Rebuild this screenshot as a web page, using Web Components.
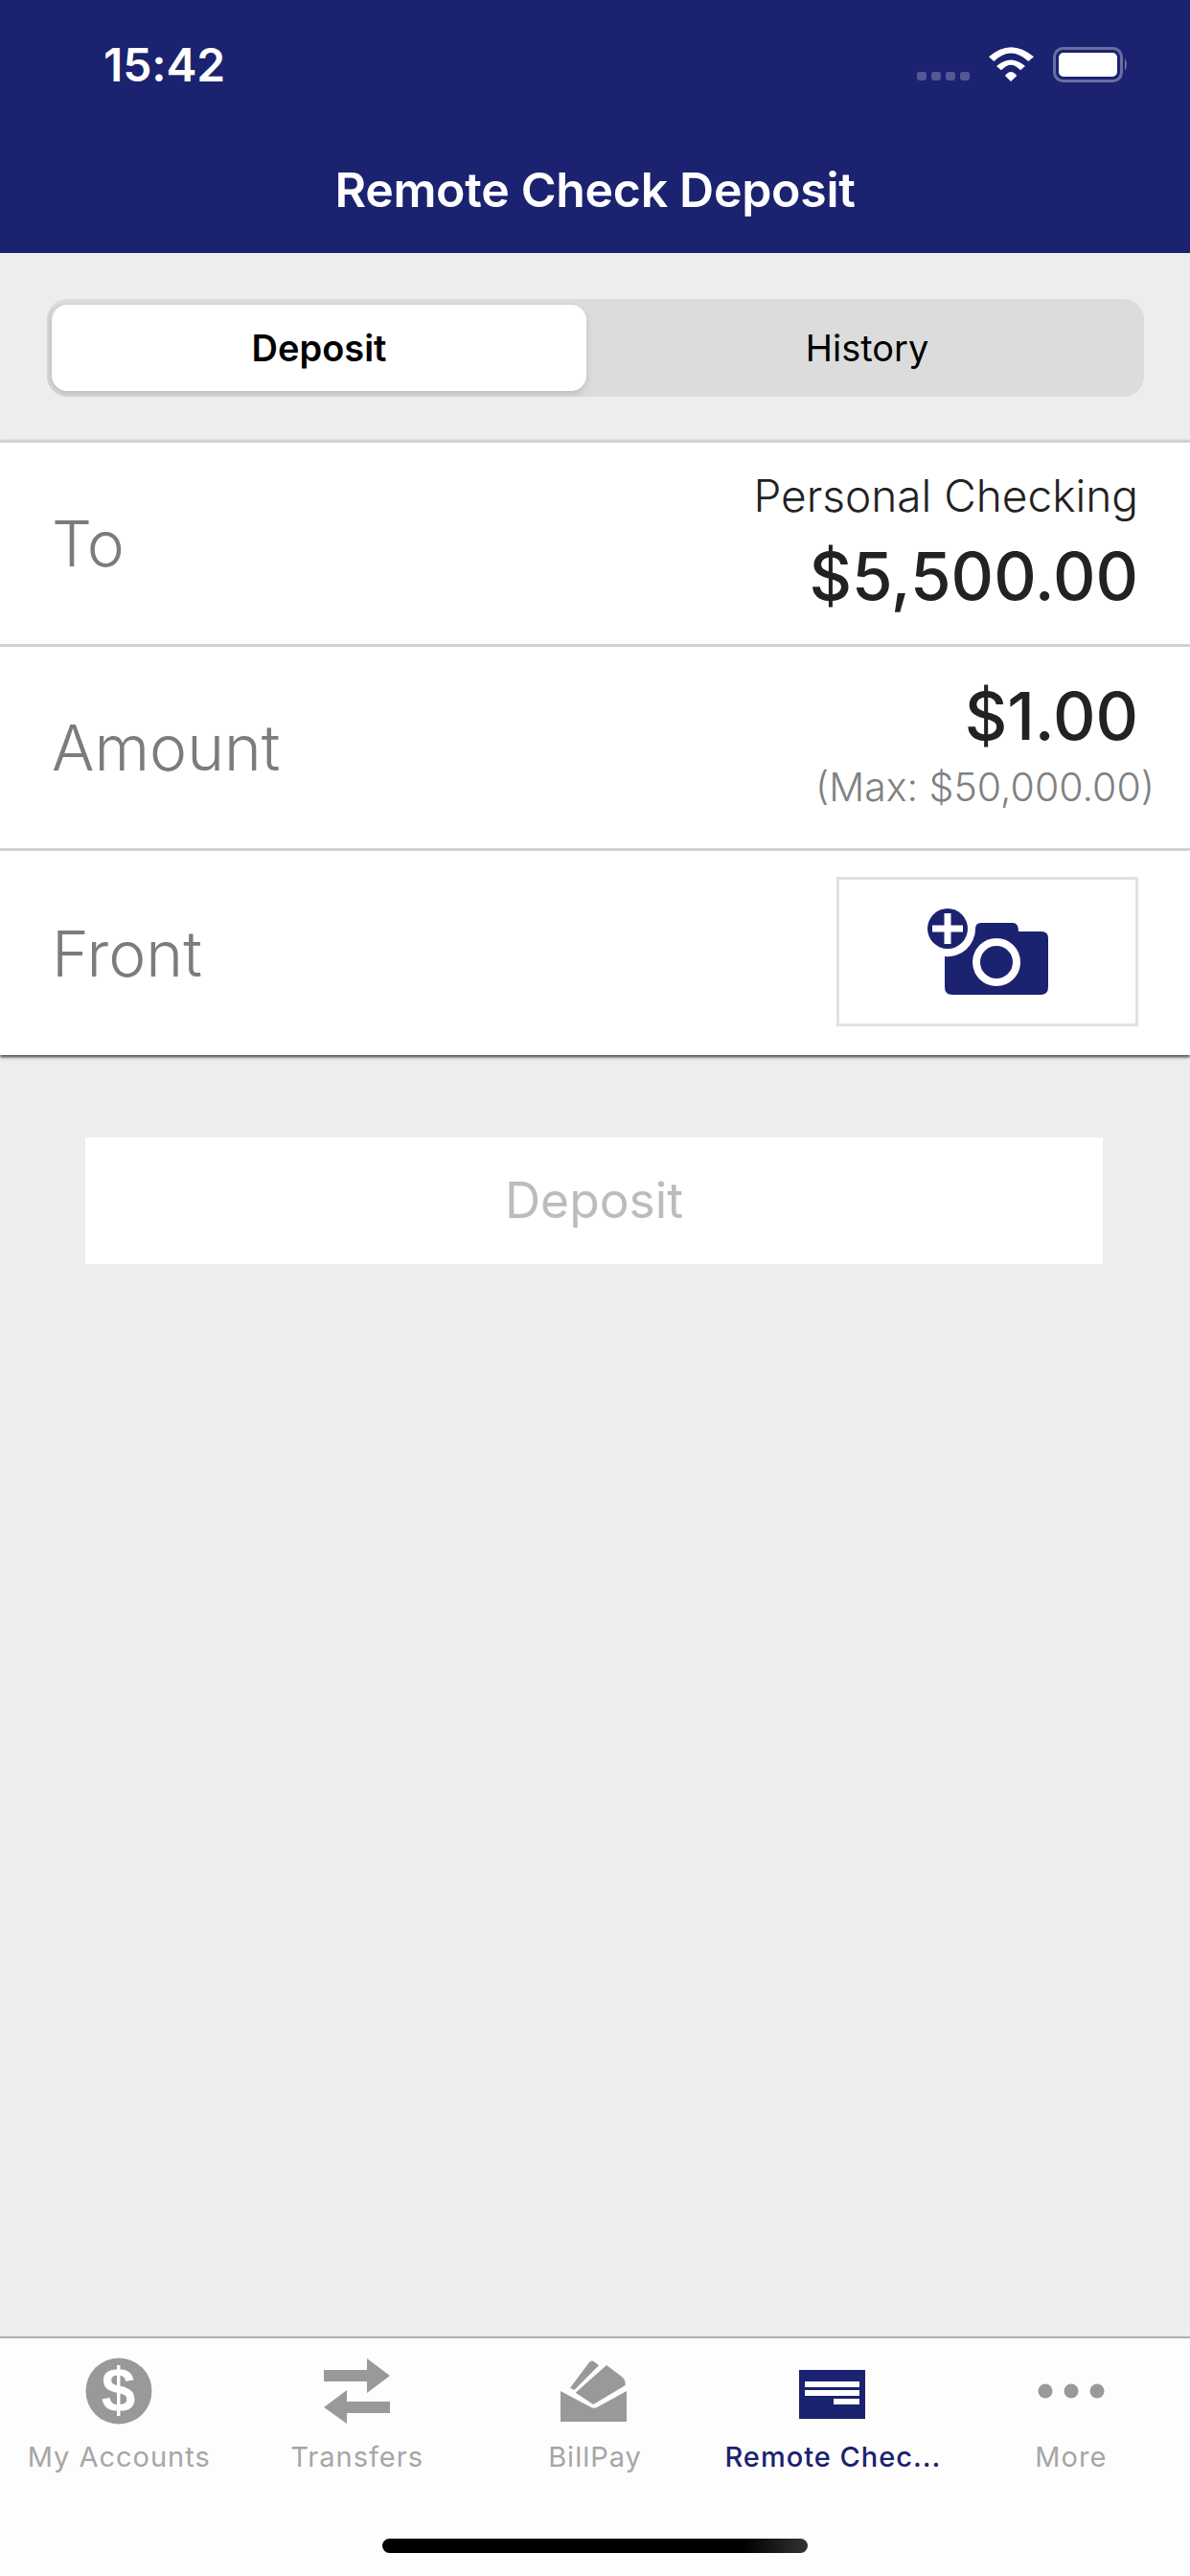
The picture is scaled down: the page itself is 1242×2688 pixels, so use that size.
<!DOCTYPE html>
<html><head><meta charset="utf-8">
<style>
html,body{margin:0;padding:0;background:#ededed;font-family:Inter,"Liberation Sans",sans-serif}
body{width:1242px;height:2688px;display:flex;flex-direction:column;overflow:hidden}
.v1{font:300 46px/55px Inter,sans-serif;color:#222;position:relative;top:-1px}
.v2{font:500 69px/84px Inter,sans-serif;color:#222}
.v3{font:300 41px/49px Inter,sans-serif;color:#808080;margin-right:-17px}
</style></head><body>
<template id="t-status"><style>
:host{display:block;height:134px;box-sizing:border-box;color:#fff;padding:44px 0 0 108px;position:relative}
.time{display:block;font:600 48px/48px Inter,sans-serif;letter-spacing:-.1px}
svg{position:absolute;left:930px;top:30px}
</style><span class="time">15:42</span>
<svg width="260" height="70" viewBox="0 0 260 70">
<g fill="#fff" fill-opacity=".25"><rect x="27" y="45" width="10" height="9" rx="3"/><rect x="42" y="45" width="10" height="9" rx="3"/><rect x="57" y="45" width="10" height="9" rx="3"/><rect x="72" y="45" width="10" height="9" rx="3"/></g>
<g fill="#fff">
<path d="M102 29.300Q125 9 149 29.300L143.300 34Q125 17 107.300 34Z"/>
<path d="M110 39Q125 26 140 39L135 43.300Q125 32 115 43.300Z"/>
<path d="M119 49Q125 41 131.300 49L125 55Z"/></g>
<rect x="170.500" y="20.500" width="70" height="34" rx="9" fill="none" stroke="#fff" stroke-opacity=".35" stroke-width="3"/>
<rect x="175" y="25" width="61" height="25" rx="5" fill="#fff"/>
<path d="M244 31Q248 37 244 44Z" fill="#fff" fill-opacity=".4"/>
</svg></template>
<template id="t-nav"><style>
:host{display:block;background:#1b2270;height:264px}
h1{margin:0;height:130px;display:flex;align-items:center;justify-content:center;padding-bottom:2px;box-sizing:border-box;color:#fff;font:600 50px/1 Inter,sans-serif;letter-spacing:-.3px}
</style><slot name="status"></slot><h1><slot></slot></h1></template>
<template id="t-seg"><style>
:host{display:flex;margin:48px 48px 45px 49px;height:102px;background:#dcdcdc;border-radius:21px;padding:6px 6px 6px 5px;box-sizing:border-box;font:400 38px/1 Inter,sans-serif;color:#000;overflow:hidden}
div{flex:1;display:flex;align-items:center;justify-content:center;padding-left:10px}
.on{flex:0 0 558px;padding:0;background:#fff;border-radius:16px;font-weight:600;box-shadow:0 4px 8px rgba(0,0,0,.12),-3px 0 4px rgba(0,0,0,.05)}
</style><div class="on"><slot name="a"></slot></div><div><slot name="b"></slot></div></template>
<template id="t-row"><style>
:host{display:flex;align-items:center;justify-content:space-between;background:#fff;border-top:3px solid #d2d2d2;height:210px;padding:0 54px;box-sizing:content-box;position:relative}
:host([tall]){height:213px}
.l{font:300 66px/1 Inter,sans-serif;color:#7c7c7c}
.r{display:flex;flex-direction:column;align-items:flex-end}
</style><span class="l"><slot name="label"></slot></span><div class="r"><slot></slot></div></template>
<template id="t-camera"><style>
:host{display:flex;align-items:center;justify-content:center;box-sizing:border-box;width:315px;height:156px;border:3px solid #e1e1e1;background:#fff;margin-bottom:3px}
</style><svg width="126" height="90" viewBox="0 0 126 90">
<path fill="#1b2270" d="M18 50A29 29 0 0 0 50 21Q50 15 56 15H89Q95 15 95 24H119Q126 24 126 31V82Q126 90 118 90H26Q18 90 18 82Z"/>
<circle cx="72" cy="56" r="21" fill="#1b2270" stroke="#fff" stroke-width="8"/>
<circle cx="21" cy="21" r="21" fill="#1b2270"/>
<path d="M21 5V37M5 21H37" stroke="#fff" stroke-width="7" fill="none"/>
</svg></template>
<template id="t-tabs"><style>
:host{display:flex;background:#fdfdfd;border-top:2px solid #adadad;height:250px;position:relative;box-sizing:border-box}
.h{position:absolute;left:399px;top:209px;width:444px;height:15px;border-radius:8px;background:linear-gradient(90deg,#000 85%,#333)}
</style><slot></slot><div class="h"></div></template>
<template id="t-tab"><style>
:host{flex:1 1 0;min-width:0;display:flex;flex-direction:column;align-items:center;color:#a6a6a6;font:400 29px/1 Inter,sans-serif;letter-spacing:1px}
:host([active]){color:#1b2270;font-weight:500}
.i{height:110px;display:flex;justify-content:center;width:100%}
.t{margin-top:-1px}
</style><div class="i"><slot name="icon"></slot></div><span class="t"><slot></slot></span></template>
<template id="t-btn"><style>
:host{display:flex;align-items:center;justify-content:center;background:#fff;margin:86px 91px 0 89px;height:132px;color:#bcbcbc;font:400 51.500px/1 Inter,sans-serif}
</style><slot></slot></template>

<app-nav>
 <app-status slot="status"></app-status>Remote Check Deposit
</app-nav>
<app-seg><span slot="a">Deposit</span><span slot="b">History</span></app-seg>
<div style="box-shadow:0 2px 3px rgba(0,0,0,.75);position:relative">
<app-row><span slot="label">To</span>
 <span class="v1" style="margin-bottom:13px">Personal Checking</span>
 <span class="v2">$5,500.00</span>
</app-row>
<app-row><span slot="label">Amount</span>
 <span class="v2" style="margin-bottom:8px">$1.00</span>
 <span class="v3" style="margin-bottom:10px">(Max: $50,000.00)</span>
</app-row>
<app-row tall><span slot="label">Front</span><app-camera></app-camera></app-row>
</div>
<app-btn>Deposit</app-btn>
<div style="flex:1"></div>
<app-tabs>
 <app-tab><svg slot="icon" width="70" height="110" viewBox="0 0 70 110"><circle cx="35" cy="55" r="34.500" fill="#999"/><text x="35" y="76" text-anchor="middle" fill="#fff" font-family="Liberation Sans" font-weight="700" font-size="64">$</text></svg>My Accounts</app-tab>
 <app-tab><svg slot="icon" width="70" height="110" viewBox="0 0 70 110"><path fill="#999" d="M0 33H45V21L69 39 45 57V45H0ZM69 66H24V54L0 72 24 89V78H69Z"/></svg>Transfers</app-tab>
 <app-tab><svg slot="icon" width="70" height="110" viewBox="586 2440 70 110" style="overflow:visible"><g fill="#999"><path d="M585 2495 617 2512Q620 2513.500 623 2512L654 2495V2527H585Z"/><path d="M600.700 2496.700 633 2468 649 2480Q653 2483 652.700 2489L619.300 2509Z"/><path d="M595 2491.700 615 2465Q618 2462 621 2465L625 2468.300 599.300 2494Z"/></g></svg>BillPay</app-tab>
 <app-tab active><svg slot="icon" width="70" height="110" viewBox="0 0 70 110"><rect y="33" width="69" height="51" fill="#1b2270"/><g fill="#fff"><rect x="6" y="45" width="57" height="6"/><rect x="6" y="54" width="57" height="6"/><rect x="36" y="63" width="27" height="6"/></g></svg>Remote Chec...</app-tab>
 <app-tab><svg slot="icon" width="70" height="110" viewBox="0 0 70 110"><g fill="#999"><circle cx="8" cy="55" r="7.500"/><circle cx="35" cy="55" r="7.500"/><circle cx="62" cy="55" r="7.500"/></g></svg>More</app-tab>
</app-tabs>
<script>
for(const [n,id] of [['app-status','t-status'],['app-nav','t-nav'],['app-seg','t-seg'],['app-row','t-row'],['app-camera','t-camera'],['app-tabs','t-tabs'],['app-tab','t-tab'],['app-btn','t-btn']]){
 customElements.define(n,class extends HTMLElement{constructor(){super();this.attachShadow({mode:'open'}).appendChild(document.getElementById(id).content.cloneNode(true));}});
}
</script>
</body></html>
